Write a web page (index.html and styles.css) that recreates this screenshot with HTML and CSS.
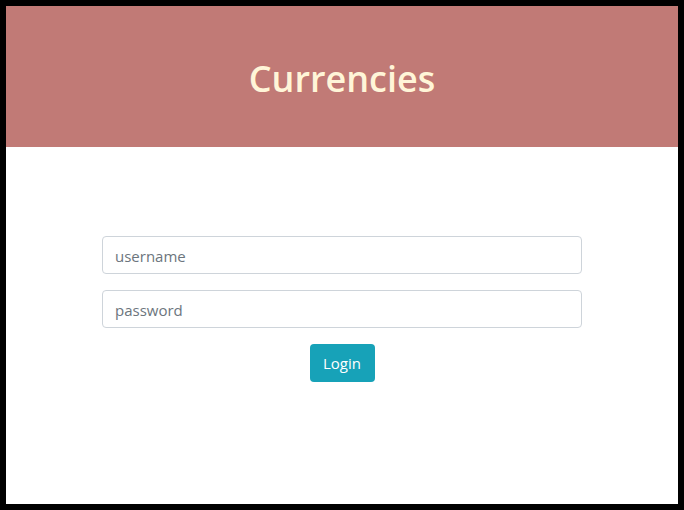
FILE: index.html
```html
<!DOCTYPE html>
<html>
<head>
<meta charset="utf-8">
<link rel="stylesheet" href="styles.css">
</head>
<body>
<div class="frame">
  <header class="header">
    <h1 class="title">Currencies</h1>
  </header>
  <main class="content">
    <form class="login">
      <input class="field" type="text" placeholder="username">
      <input class="field" type="password" placeholder="password">
      <button class="btn" type="button">Login</button>
    </form>
  </main>
</div>
</body>
</html>
```
FILE: styles.css
```css
html, body {
  margin: 0;
  padding: 0;
  background: #000;
}
.frame {
  box-sizing: border-box;
  width: 684px;
  height: 510px;
  border: 6px solid #000;
  background: #fff;
  display: flex;
  flex-direction: column;
  font-family: "Open Sans", "Noto Sans", sans-serif;
}
.header {
  height: 141px;
  background: #c17a76;
  display: flex;
  align-items: center;
  justify-content: center;
}
.title {
  margin: 0;
  color: #fff5d8;
  font-size: 36px;
  font-weight: 600;
  line-height: 1.2;
  position: relative;
  top: 2px;
}
.content {
  flex: 1;
  padding-top: 89px;
  display: flex;
  justify-content: center;
}
.login {
  width: 480px;
  display: flex;
  flex-direction: column;
  align-items: center;
  gap: 16px;
}
.field {
  box-sizing: border-box;
  width: 100%;
  height: 38px;
  padding: 7px 12px 5px;
  border: 1px solid #ced4da;
  border-radius: 4px;
  font-family: inherit;
  font-size: 15px;
  color: #495057;
}
.field::placeholder {
  color: #6c757d;
}
.btn {
  box-sizing: border-box;
  width: 65px;
  height: 38px;
  border: none;
  border-radius: 4px;
  background: #17a2b8;
  color: #fff;
  font-family: inherit;
  font-size: 15px;
  padding: 0;
}
```
